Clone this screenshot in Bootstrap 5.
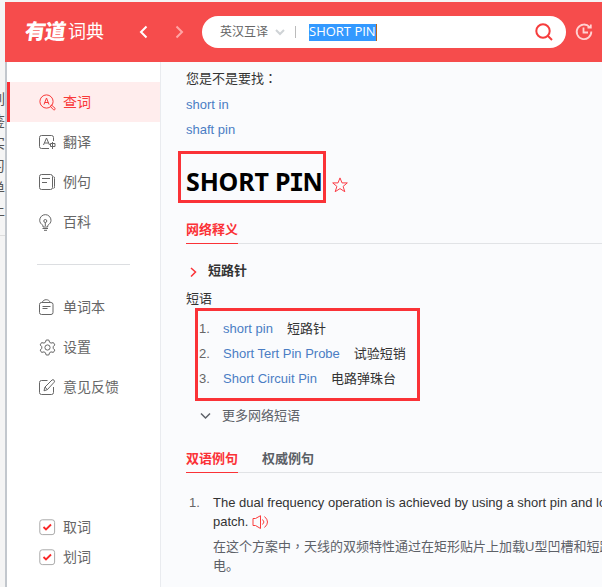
<!DOCTYPE html>
<html lang="zh-CN">
<head>
<meta charset="utf-8">
<meta name="viewport" content="width=device-width, initial-scale=1">
<title>有道词典</title>
<link href="https://cdn.jsdelivr.net/npm/bootstrap@5.3.0/dist/css/bootstrap.min.css" rel="stylesheet">
<style>
body{font:13px/25px "Liberation Sans","Noto Sans CJK SC",sans-serif;color:#333;background:#f4f4f4;height:587px;overflow:hidden}
svg{display:block;fill:none;flex:none}
.ink{stroke:currentColor}
.mid{font-family:"Noto Sans CJK TC",sans-serif;line-height:1}
.behind{width:5px;height:236px;flex:none;background:#f5f5f5;border-bottom:1px solid #ddd;padding-top:88px;font-size:14px;line-height:22.2px;color:#555}
.app-win{height:585px;margin-top:2px;min-width:0}
.topbar{height:60px;background:#f64c4c;color:#fff;padding-left:20px}
.brand{width:82px;font-size:18px;line-height:30px}
.brand-a{font-size:21px;font-weight:900;letter-spacing:-1px;transform:skewX(-8deg);margin-right:3px}
.brand-b{font-weight:400}
.history{width:79px}
.searchbox{width:364px;height:32px;margin-left:16px;background:#fff;color:#666;padding:0 13px 0 18px}
.mode{font-size:12px;width:48px;white-space:nowrap}
.search-sep{width:1px;height:12px;background:#bbb;margin:0 13px 0 10px}
.picked{background:#39f;color:#fff;font-family:"Open Sans","Noto Sans",sans-serif;font-size:13px;line-height:15px;width:68px;height:17px;border-right:1px solid #b5651d;white-space:nowrap}
.side{width:156px;flex:none;background:#fff;border-left:2px solid #c2c7cd;border-right:1px solid #e9ebef;padding-top:20px;height:525px}
.side-item{height:40px;padding-left:32px;font-size:14px;line-height:40px;color:#666}
.side-item svg{margin-right:7px}
.side-item.on{background:#ffeded;color:#f93a3a;border-left:3px solid #fa3237;padding-left:29px}
.side-rule{height:1px;width:93px;background:#dcdee1;margin:22px 0 22px 30px}
.ticks{margin-top:105px}
.tick-item{height:30px;padding-left:32px;font-size:14px;color:#666}
.tick-item svg{margin-right:7px}
.pane{background:#fafbfd;height:525px;padding:4px 0 0 25px;overflow:hidden;min-width:0}
.lnk{color:#4a7dc4;text-decoration:none}
.hints{margin-top:1px}
.title-box{width:148px;height:52px;margin:9px 0 0 -8px;border:3px solid #fa3237;padding-left:5px}
.title-box h1{font:700 25px/55px "Noto Sans",sans-serif;color:#000;margin:0;white-space:nowrap;letter-spacing:-.15px}
.serif-i{font-family:"DejaVu Sans Mono",monospace;line-height:1;margin:0 -1.5px}
.star{margin:25px 0 0 6px}
.tabs{border-bottom:1px solid #e1e3e6;height:28px}
.tab-x{height:28px;line-height:27px;font-weight:700;color:#5b5f66;margin-right:24px}
.tab-x.on{color:#fa3237;border-bottom:1px solid #fa3237}
.phrases{width:225px;height:93px;margin:-3px 0 0 9px;border:3px solid #fa3237;padding:5px 0 0 1px}
.gloss{margin-left:14px}
.num{color:#666;width:24px;flex:none}
.more{color:#5d6168;margin:2px 0 0 14px;height:25px}
.ex{width:430px;color:#333;line-height:19px;white-space:nowrap;margin-top:20px;padding-left:3px}
.ex .cn{color:#5d6168;margin-top:6px}
</style>
<script src="https://cdn.jsdelivr.net/npm/bootstrap@5.3.0/dist/js/bootstrap.bundle.min.js"></script>
</head>
<body class="d-flex">
<div class="behind d-flex flex-column align-items-end overflow-hidden"><span>列</span><span>鉴</span><span>实</span><span>习</span><span>单</span><span>上</span></div>
<div class="app-win flex-grow-1 overflow-hidden">
  <header class="topbar d-flex align-items-center">
    <div class="brand d-flex align-items-center flex-shrink-0"><span class="brand-a">有道</span><span class="brand-b">词典</span></div>
    <div class="history d-flex align-items-center flex-shrink-0">
      <svg width="79" height="16" viewBox="0 0 79 16" stroke="#fff" stroke-width="2"><path d="M39.5 2.5 34 8l5.500 5.500"/><path stroke="#ffa5a5" d="M69.500 2.500 75 8l-5.500 5.500"/></svg>
    </div>
    <div class="searchbox rounded-pill d-flex align-items-center flex-shrink-0">
      <span class="mode">英汉互译</span>
      <svg style="margin-left:7px" width="10" height="8" viewBox="0 0 10 8" stroke="#cfd3d6" stroke-width="2"><path d="m1 2 4 4 4-4"/></svg>
      <span class="search-sep"></span><span class="picked">SHORT PIN</span>
      <svg class="ms-auto" width="18" height="18" viewBox="0 0 18 18" stroke="#f63c3c" stroke-width="2"><circle cx="8" cy="8" r="6.700"/><path d="m13 13 4 4"/></svg>
    </div>
    <svg class="ms-2" width="20" height="20" viewBox="0 0 20 20" stroke="#ffd2d2" stroke-width="1.800"><path d="M15.500 5A7.300 7.300 0 1 0 17.300 9.500M16.800 2.500V5.500H13.500"/><path d="M9.500 5.500V10.500H14"/></svg>
  </header>
  <div class="d-flex">
    <nav class="side d-flex flex-column">
      <div class="side-item on d-flex align-items-center"><svg class="ink" width="17" height="17" viewBox="0 0 17 17"><circle cx="7.500" cy="7.500" r="6.600"/><path d="m5 10.500 2.500-6.500 2.500 6.500M5.800 8.500h3.400"/><path d="m11.200 12.200 1.200-1.200 3.600 3.200c.8.900-.7 2.400-1.600 1.500z"/></svg>查词</div>
      <div class="side-item d-flex align-items-center"><svg class="ink" width="17" height="17" viewBox="0 0 17 17"><path d="M10 14.500H2.500a2 2 0 0 1-2-2v-9a2 2 0 0 1 2-2h10a2 2 0 0 1 2 2V7M4.500 11l3-7 3 7M5.500 9h4M11.500 9.500h4.500v3h-4.500zM13.500 8v7"/></svg>翻译</div>
      <div class="side-item d-flex align-items-center"><svg class="ink" width="17" height="17" viewBox="0 0 17 17"><rect x=".5" y=".5" width="13" height="15" rx="2"/><path d="M14.500 2.500q1 0 1 2v8q0 2-1 2M3 4.500h8M3 8.500h5"/></svg>例句</div>
      <div class="side-item d-flex align-items-center"><svg class="ink" width="17" height="17" viewBox="0 0 17 17"><path d="M4 11.500C2 10 .7 8.500.7 6.300a5.500 5.500 0 0 1 11.300 0c0 2.200-1.300 3.700-3.300 5.200v1.500H4zM6.300 12V8.500M3.500 14.500H9M5 16.300h3"/><circle cx="6.300" cy="7" r="1.500"/></svg>百科</div>
      <div class="side-rule"></div>
      <div class="side-item d-flex align-items-center"><svg class="ink" width="17" height="17" viewBox="0 0 17 17"><path d="M3 3.500h-.5a2 2 0 0 0-2 2v8a2 2 0 0 0 2 2h9.500a2 2 0 0 0 2-2v-8a2 2 0 0 0-2-2h-.5M3 3.500C4 1.500 5.500.7 7.200.7s3.200.8 4.300 2.800zM3.500 7.500h8M3.500 9.500h5"/></svg>单词本</div>
      <div class="side-item d-flex align-items-center"><svg class="ink" width="17" height="17" viewBox="0 0 17 17"><path d="M7.200 1h2.600l.8 2.300 1.400.8 2.400-.5 1.400 2.300-1.600 1.800v1.600l1.600 1.800-1.400 2.300-2.400-.5-1.400.8-.8 2.300H7.200l-.8-2.300-1.400-.8-2.400.5-1.400-2.300 1.600-1.800V7.700L1.200 5.900l1.400-2.300 2.400.5 1.400-.8z"/><circle cx="8.500" cy="8.500" r="2.600"/></svg>设置</div>
      <div class="side-item d-flex align-items-center"><svg class="ink" width="17" height="17" viewBox="0 0 17 17"><path d="M8.500 1.500H2.500q-2 0-2 2v10q0 2 2 2h10q2 0 2-2V8M5 11.800l1-3.800L13 1q1-.8 2 .2t.2 2L8.300 10.700zM6 8l2.300 2.700"/></svg>意见反馈</div>
      <div class="ticks">
        <div class="tick-item d-flex align-items-center"><svg width="17" height="17" viewBox="0 0 17 17"><rect x=".8" y=".8" width="14.800" height="14.800" rx="2.500" stroke="#aaa"/><path d="m4.500 8 2.500 2.500 5-5" stroke="#fa2828" stroke-width="1.800"/></svg>取词</div>
        <div class="tick-item d-flex align-items-center"><svg width="17" height="17" viewBox="0 0 17 17"><rect x=".8" y=".8" width="14.800" height="14.800" rx="2.500" stroke="#aaa"/><path d="m4.500 8 2.500 2.500 5-5" stroke="#fa2828" stroke-width="1.800"/></svg>划词</div>
      </div>
    </nav>
    <main class="pane flex-grow-1">
      <div>您是不是要找<span class="mid" lang="zh-TW">：</span></div>
      <div class="hints"><a class="lnk" href="#">short in</a></div>
      <div><a class="lnk" href="#">shaft pin</a></div>
      <div class="d-flex align-items-center">
        <div class="title-box"><h1>SHORT P<span class="serif-i">I</span>N</h1></div>
        <svg class="star" width="16" height="16" viewBox="0 0 16 16" stroke="#fa3c46"><path d="m8 .9 2 5h5.300l-4.200 3.500 1.700 5.300L8 11.600l-4.800 3.100 1.700-5.300L.7 5.900H6z"/></svg>
      </div>
      <div class="tabs d-flex" style="margin-top:13px"><span class="tab-x on">网络释义</span></div>
      <div class="d-flex align-items-center fw-bold" style="margin-top:14px"><svg style="margin:2px 11px 0 3px" width="8" height="10" viewBox="0 0 8 10" stroke="#fa3237" stroke-width="1.500"><path d="m2 1 4.500 4L2 9.500"/></svg>短路针</div>
      <div style="margin-top:3px">短语</div>
      <div class="phrases">
        <div class="d-flex"><span class="num">1.</span><a class="lnk" href="#">short pin</a><span class="gloss">短路针</span></div>
        <div class="d-flex"><span class="num">2.</span><a class="lnk" href="#">Short Tert Pin Probe</a><span class="gloss">试验短销</span></div>
        <div class="d-flex"><span class="num">3.</span><a class="lnk" href="#">Short Circuit Pin</a><span class="gloss">电路弹珠台</span></div>
      </div>
      <div class="more d-flex align-items-center"><svg class="ink" style="margin-right:11px" width="11" height="8" viewBox="0 0 11 8" stroke-width="1.500"><path d="m1 1.500 4.500 4.500L10 1.500"/></svg>更多网络短语</div>
      <div class="tabs d-flex" style="margin-top:17px"><span class="tab-x on">双语例句</span><span class="tab-x">权威例句</span></div>
      <div class="ex d-flex"><span class="num">1.</span>
        <div><div>The dual frequency operation is achieved by using a short pin and loaded</div>
        <div class="d-flex align-items-center">patch.<svg class="ms-1" width="17" height="14" viewBox="0 0 17 14" stroke="#fa3c3c"><path d="M3.500 3.500H1v7h2.500L8.500 13.500V.7zM10.500 4.500q3 2.500 0 5M12.500 1.500q6 5.500 0 11"/></svg></div>
        <div class="cn">在这个方案中<span class="mid" lang="zh-TW">，</span>天线的双频特性通过在矩形贴片上加载U型凹槽和短路针<br>电。</div></div>
      </div>
    </main>
  </div>
</div>
</body>
</html>
